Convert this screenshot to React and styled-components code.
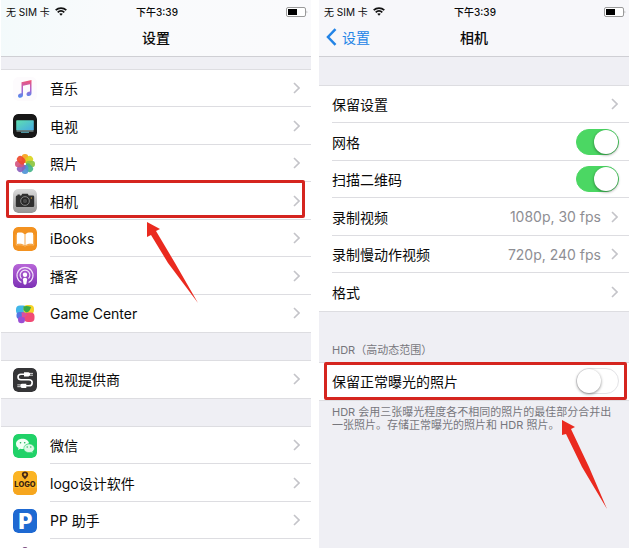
import React, { useState } from "react";
import styled, { createGlobalStyle, css } from "styled-components";

const GlobalStyle = createGlobalStyle`
  * {
    box-sizing: border-box;
  }

  body {
    margin: 0;
    background: #ffffff;
    color: #0a0a0a;
    font-family: Inter, "Noto Sans CJK SC", sans-serif;
    font-size: 14px;
  }
`;

const Page = styled.main`
  display: grid;
  grid-template-columns: 1fr 1fr;
  gap: 8px;
  height: 100vh;
  padding-left: 1px;
  overflow: hidden;
`;

const Screen = styled.section`
  min-width: 0;
  overflow: hidden;
  background: #efeff4;
`;

const Header = styled.header`
  height: 57px;
  border-bottom: 1px solid #cfcfd4;
  background: ${(props) =>
    props.$tinted
      ? "linear-gradient(100deg, #f3fafb, #f9fafc 35%, #fafafc)"
      : "#f7f7fa"};
`;

const StatusBar = styled.div`
  display: grid;
  grid-template-columns: 1fr auto 1fr;
  align-items: center;
  height: 23px;
  padding: 0 3px 0 5px;
  font-size: 10px;
`;

const Carrier = styled.span`
  display: flex;
  align-items: center;
  gap: 5px;
`;

const Clock = styled.span`
  font-weight: 500;
`;

const BatterySlot = styled.span`
  display: flex;
  justify-content: flex-end;
`;

const NavBar = styled.div`
  display: grid;
  grid-template-columns: 1fr auto 1fr;
  align-items: center;
  height: 28px;
  padding: 0 7px;
`;

const Title = styled.h1`
  grid-column: 2;
  margin: 0;
  font-size: 14px;
  font-weight: 500;
`;

const BackLink = styled.a`
  display: flex;
  align-items: center;
  gap: 5px;
  color: #2384e6;
  text-decoration: none;
`;

const Spacer = styled.div`
  height: ${(props) => (props.$small ? 13 : 29)}px;
`;

const Group = styled.div`
  background: #ffffff;
  box-shadow: 0 0 0 1px #dddde1;
`;

const rowStyles = css`
  position: relative;
  display: flex;
  align-items: stretch;
  gap: 13px;
  height: 37px;
  padding-left: ${(props) => (props.$withIcon ? 12 : 13)}px;
  color: inherit;
  text-decoration: none;

  &:nth-child(even) {
    height: 38px;
  }
`;

const RowLink = styled.a`
  ${rowStyles}
`;

const RowLabel = styled.label`
  ${rowStyles}
`;

const IconSlot = styled.span`
  display: flex;
  align-items: center;

  svg {
    display: block;
    border-radius: 5px;
  }
`;

const RowBody = styled.span`
  display: flex;
  flex: 1;
  align-items: center;
  justify-content: space-between;
  padding-right: ${(props) => (props.$toggle ? 10 : 11)}px;
  border-bottom: 1px solid #dddde1;

  ${RowLink}:last-child > &,
  ${RowLabel}:last-child > & {
    border-bottom-color: transparent;
  }
`;

const RowEnd = styled.span`
  display: flex;
  align-items: center;
  gap: 10px;
  color: #8e8e93;
`;

const Switch = styled.input`
  appearance: none;
  display: flex;
  width: 43px;
  height: 26px;
  margin: 0;
  padding: 1px;
  border: 1px solid #e3e3e6;
  border-radius: 13px;
  background: #ffffff;

  &::before {
    content: "";
    width: 24px;
    height: 24px;
    margin: -1px;
    border-radius: 50%;
    background: #ffffff;
    box-shadow: 0 1px 3px rgba(0, 0, 0, 0.45);
  }

  &:checked {
    justify-content: flex-end;
    border-color: #4bd763;
    background: #4bd763;
  }
`;

const GroupTitle = styled.h2`
  margin: 0;
  padding: 31px 13px 5px;
  color: #77777d;
  font-size: 11px;
  font-weight: 400;
  line-height: 16px;
`;

const GroupNote = styled.p`
  margin: 0;
  padding: 6px 13px;
  color: #77777d;
  font-size: 11px;
  line-height: 13px;
`;

const Highlight = styled.span`
  position: absolute;
  inset: ${(props) => (props.$raised ? "-2px 6px 2px 5px" : "-1px 2px 0 5px")};
  border: 3px solid #d5251f;
  border-radius: 2px;
  pointer-events: none;
`;

const Pointer = styled.svg`
  position: absolute;
  z-index: 1;
  top: ${(props) => props.$top}px;
  left: ${(props) => props.$left}px;
  overflow: visible;
  pointer-events: none;
`;

const WifiIcon = () => (
  <svg width="12" height="9" viewBox="0 0 12 9" fill="none" stroke="#111" strokeWidth="1.7">
    <path d="M0.7 3.2C3.7.3 8.3.3 11.3 3.2" />
    <path d="M2.7 5.3C4.6 3.5 7.4 3.5 9.3 5.3" />
    <path d="M4.2 6.8C5.2 5.9 6.8 5.9 7.8 6.8L6 8.8Z" fill="#111" stroke="none" />
  </svg>
);

const BatteryIcon = () => (
  <svg width="22" height="10" viewBox="0 0 22 10">
    <rect x="0.5" y="0.5" width="19" height="9" rx="1.5" fill="#fff" stroke="#9a9a9a" />
    <rect x="2" y="2" width="9" height="6" fill="#000" />
    <path d="M20.7 3.4Q22 5 20.7 6.6Z" fill="#8d8d8d" />
  </svg>
);

const Chevron = () => (
  <svg width="7" height="12" viewBox="0 0 7 12" fill="none" stroke="#c4c4c9" strokeWidth="1.6">
    <path d="M1 1L6 6L1 11" />
  </svg>
);

const BackIcon = () => (
  <svg width="11" height="18" viewBox="0 0 11 18" fill="none" stroke="#2384e6" strokeWidth="2.5">
    <path d="M9.5 1.2L2 9L9.5 16.8" />
  </svg>
);

const AppIcon = ({ children }) => (
  <svg width="24" height="24" viewBox="0 0 24 24" aria-hidden="true">
    {children}
  </svg>
);

const MusicIcon = () => (
  <AppIcon>
    <defs>
      <linearGradient id="note" x1="0" y1="0" x2="0" y2="1">
        <stop offset="0" stopColor="#f4536f" />
        <stop offset="0.5" stopColor="#b262cd" />
        <stop offset="1" stopColor="#4c8ff0" />
      </linearGradient>
    </defs>
    <rect width="24" height="24" rx="5" fill="#fdfbfd" />
    <path
      d="M8.5 5.2L18.5 3V16.2C18.5 18 17.3 19 15.8 19C14.2 19 13.4 18 13.5 16.9C13.6 15.4 15 14.8 17 14.5V7.3L10 8.8V18C10 19.8 8.7 20.8 7.2 20.8C5.7 20.8 4.9 19.8 5 18.7C5.1 17.2 6.5 16.7 8.5 16.3Z"
      fill="url(#note)"
    />
  </AppIcon>
);

const TvIcon = () => (
  <AppIcon>
    <defs>
      <linearGradient id="tv" x1="0" y1="0" x2="1" y2="1">
        <stop offset="0" stopColor="#5fe0b0" />
        <stop offset="1" stopColor="#45a9e3" />
      </linearGradient>
    </defs>
    <rect width="24" height="24" rx="5" fill="#171717" />
    <rect x="3.2" y="6.3" width="17.6" height="10" rx="0.6" fill="url(#tv)" />
    <path d="M3.5 17H20.5" stroke="#d5f3ef" strokeWidth="0.7" />
    <path d="M8 18.3H16" stroke="#5cb3c4" strokeWidth="1" />
  </AppIcon>
);

const petals = [
  "#f7a21b",
  "#d9d521",
  "#8cc63f",
  "#45b58a",
  "#4f94d6",
  "#8b62bd",
  "#d4557f",
  "#ee4b2f",
];

const PhotosIcon = () => (
  <AppIcon>
    <rect width="24" height="24" rx="5" fill="#fff" />
    {petals.map((color, index) => (
      <rect
        key={color}
        x="8.7"
        y="2"
        width="6.6"
        height="9.2"
        rx="3.2"
        fill={color}
        fillOpacity="0.92"
        transform={`rotate(${index * 45} 12 12)`}
      />
    ))}
    <circle cx="12" cy="12" r="1" fill="#fff" />
  </AppIcon>
);

const CameraIcon = () => (
  <AppIcon>
    <defs>
      <linearGradient id="camera" x1="0" y1="0" x2="0" y2="1">
        <stop offset="0" stopColor="#dcdcdc" />
        <stop offset="1" stopColor="#949494" />
      </linearGradient>
    </defs>
    <rect width="24" height="24" rx="5" fill="url(#camera)" />
    <path
      d="M4.5 5.6H6.8V6.5H8.2L9.3 4.8H14.7L15.8 6.5H20Q21.2 6.5 21.2 7.7V16.8Q21.2 18 20 18H4Q2.8 18 2.8 16.8V7.7Q2.8 6.5 4.5 6.5Z"
      fill="#303030"
    />
    <circle cx="12" cy="12" r="4.4" fill="#303030" stroke="#888" strokeWidth="0.9" />
    <circle cx="12" cy="12" r="2.7" fill="#494949" stroke="#1d1d1d" strokeWidth="0.8" />
    <circle cx="18.4" cy="9" r="0.7" fill="#c79a36" />
  </AppIcon>
);

const BooksIcon = () => (
  <AppIcon>
    <rect width="24" height="24" rx="5" fill="#f39220" />
    <path
      d="M11.6 7.2C9.7 5.2 6.2 5.3 4 6V17C6.8 16.3 9.8 16.6 11.6 18.3ZM12.4 7.2C14.3 5.2 17.8 5.3 20 6V17C17.2 16.3 14.2 16.6 12.4 18.3Z"
      fill="#fff"
    />
    <path d="M3.3 7.5V18.1C6.7 17.5 9.7 17.7 12 19.2C14.3 17.7 17.3 17.5 20.7 18.1V7.5" fill="none" stroke="#ffe1b5" strokeWidth="0.5" />
  </AppIcon>
);

const PodcastIcon = () => (
  <AppIcon>
    <defs>
      <linearGradient id="podcast" x1="0" y1="0" x2="0" y2="1">
        <stop offset="0" stopColor="#b866d8" />
        <stop offset="1" stopColor="#7d31b5" />
      </linearGradient>
    </defs>
    <rect width="24" height="24" rx="5" fill="url(#podcast)" />
    <g fill="none" stroke="#f3e3fa" strokeWidth="1.2">
      <path d="M8.4 18.5A8 8 0 1 1 15.6 18.5" />
      <path d="M8.5 14.5A4.9 4.9 0 1 1 15.5 14.5" />
    </g>
    <circle cx="12" cy="10.7" r="2.2" fill="#fff" />
    <path d="M9.8 14.9Q12 12.7 14.2 14.9L13.4 20Q12 21.6 10.6 20Z" fill="#fff" />
  </AppIcon>
);

const GameCenterIcon = () => (
  <AppIcon>
    <rect width="24" height="24" rx="5" fill="#fff" />
    <rect x="3" y="3.5" width="11" height="9" rx="4" fill="#41b6e8" />
    <rect x="10.5" y="3" width="10.5" height="9" rx="4" fill="#f5d327" />
    <path d="M10.5 4.5Q14 3.5 18 5Q17 10 13 10.5L10.5 8Z" fill="#39a848" />
    <rect x="3.5" y="10" width="9" height="7" rx="3" fill="#5574e2" />
    <rect x="11" y="10.5" width="10.5" height="9.5" rx="4" fill="#f14b75" />
    <circle cx="8.5" cy="17.7" r="3.5" fill="#9a4ed4" />
    <path d="M8.5 10.5Q12 9.5 14 12Q13 16 9 15Z" fill="#dc4f9d" />
  </AppIcon>
);

const ProviderIcon = () => (
  <AppIcon>
    <rect width="24" height="24" rx="5" fill="#353537" />
    <path
      d="M11.5 6.3H8Q5 6.3 5 9Q5 11.8 8 11.8H16Q19.2 11.8 19.2 14.7Q19.2 17.8 16 17.8H13"
      fill="none"
      stroke="#fff"
      strokeWidth="1.6"
    />
    <path d="M11 4.2H15.5L17 5V7.6L15.5 8.4H11ZM13.3 15.7H8.8L7.3 16.5V19.1L8.8 19.9H13.3Z" fill="#fff" />
    <path d="M17 5.4H20M17 7.2H20M7.3 16.9H4.3M7.3 18.7H4.3" stroke="#fff" strokeWidth="0.8" />
  </AppIcon>
);

const WechatIcon = () => (
  <AppIcon>
    <rect width="24" height="24" rx="5" fill="#20d268" />
    <path
      d="M9.5 4.8C5.8 4.8 3 7 3 10C3 11.8 4 13.2 5.5 14.1L5 16L7.4 14.8Q9.2 15.3 11 15C11 11.5 13.5 9.6 16.1 9.5C15.7 6.7 12.9 4.8 9.5 4.8Z"
      fill="#f2fff6"
    />
    <path
      d="M16 10C12.9 10 10.8 12 10.8 14.3C10.8 16.7 13 18.6 16 18.6Q17.1 18.6 18.2 18.2L20 19.2L19.5 17.5C20.7 16.7 21.4 15.6 21.4 14.3C21.4 12 19.1 10 16 10Z"
      fill="#dcf8e6"
      stroke="#20d268"
      strokeWidth="0.5"
    />
    <g fill="#20b45b">
      <circle cx="7.5" cy="8.8" r="0.8" />
      <circle cx="11.7" cy="8.8" r="0.8" />
      <circle cx="14.2" cy="13" r="0.7" />
      <circle cx="17.8" cy="13" r="0.7" />
    </g>
  </AppIcon>
);

const LogoIcon = () => (
  <AppIcon>
    <rect width="24" height="24" rx="5" fill="#fbb424" />
    <path d="M0 17H24V19Q24 24 19 24H5Q0 24 0 19Z" fill="#f6a61e" />
    <path d="M12 8.5C10.5 6.5 8.8 5.2 8.8 3.5C8.8 1.6 10.2.5 12 .5C13.8.5 15.2 1.6 15.2 3.5C15.2 5.2 13.5 6.5 12 8.5Z" fill="#4a2c16" />
    <circle cx="12" cy="3.6" r="1.3" fill="#fbb424" />
    <text x="12" y="15.5" fill="#38200f" fontFamily="Inter" fontSize="7.5" fontWeight="800" textAnchor="middle">
      LOGO
    </text>
  </AppIcon>
);

const PpIcon = () => (
  <AppIcon>
    <rect width="24" height="24" rx="5" fill="#1e69d2" />
    <text x="12.5" y="19.5" fill="#fff" fontFamily="Inter" fontSize="21" fontWeight="900" textAnchor="middle">
      P
    </text>
    <circle cx="12.8" cy="10" r="2" fill="#1e69d2" />
  </AppIcon>
);

const NextAppIcon = () => (
  <AppIcon>
    <rect width="24" height="24" rx="5" fill="#fff" />
    <circle cx="12" cy="4" r="3" fill="#7b4a80" />
  </AppIcon>
);

const ARROW_LEFT = "0,0 13,7 9,9 28,41 51,81 21,41 4,13 0,15";
const ARROW_RIGHT = "0,0 13,7 9,9 27,47 45,89 20,47 4,14 0,15";

const settingGroups = [
  [
    { icon: <MusicIcon />, name: "音乐" },
    { icon: <TvIcon />, name: "电视" },
    { icon: <PhotosIcon />, name: "照片" },
    { icon: <CameraIcon />, name: "相机", highlighted: true },
    { icon: <BooksIcon />, name: "iBooks" },
    { icon: <PodcastIcon />, name: "播客" },
    { icon: <GameCenterIcon />, name: "Game Center" },
  ],
  [{ icon: <ProviderIcon />, name: "电视提供商" }],
  [
    { icon: <WechatIcon />, name: "微信" },
    { icon: <LogoIcon />, name: "logo设计软件" },
    { icon: <PpIcon />, name: "PP 助手" },
    { icon: <NextAppIcon />, name: "" },
  ],
];

const PhoneStatus = () => (
  <StatusBar>
    <Carrier>
      无 SIM 卡
      <WifiIcon />
    </Carrier>
    <Clock>下午3:39</Clock>
    <BatterySlot>
      <BatteryIcon />
    </BatterySlot>
  </StatusBar>
);

const SettingRow = ({ icon, name, value, highlighted }) => (
  <RowLink href="#" $withIcon={Boolean(icon)}>
    {icon && <IconSlot>{icon}</IconSlot>}
    <RowBody>
      {name}
      <RowEnd>
        {value}
        <Chevron />
      </RowEnd>
    </RowBody>
    {highlighted && (
      <>
        <Highlight $raised />
        <Pointer $top={40} $left={146} width="51" height="81">
          <polygon points={ARROW_LEFT} fill="#ea2a1f" />
        </Pointer>
      </>
    )}
  </RowLink>
);

const SwitchRow = ({ name, on, highlighted }) => {
  const [checked, setChecked] = useState(Boolean(on));

  return (
    <RowLabel>
      <RowBody $toggle>
        {name}
        <Switch
          type="checkbox"
          role="switch"
          checked={checked}
          onChange={(e) => setChecked(e.target.checked)}
        />
      </RowBody>
      {highlighted && (
        <>
          <Highlight />
          <Pointer $top={57} $left={243} width="45" height="89">
            <polygon points={ARROW_RIGHT} fill="#ea2a1f" />
          </Pointer>
        </>
      )}
    </RowLabel>
  );
};

export default function App() {
  return (
    <>
      <GlobalStyle />
      <Page>
        <Screen>
          <Header $tinted>
            <PhoneStatus />
            <NavBar>
              <Title>设置</Title>
            </NavBar>
          </Header>
          {settingGroups.map((group, index) => (
            <React.Fragment key={index}>
              <Spacer $small={index === 0} />
              <Group>
                {group.map((item) => (
                  <SettingRow key={item.name} {...item} />
                ))}
              </Group>
            </React.Fragment>
          ))}
        </Screen>

        <Screen>
          <Header>
            <PhoneStatus />
            <NavBar>
              <BackLink href="#">
                <BackIcon />
                设置
              </BackLink>
              <Title>相机</Title>
            </NavBar>
          </Header>
          <Spacer />
          <Group>
            <SettingRow name="保留设置" />
            <SwitchRow name="网格" on />
            <SwitchRow name="扫描二维码" on />
            <SettingRow name="录制视频" value="1080p, 30 fps" />
            <SettingRow name="录制慢动作视频" value="720p, 240 fps" />
            <SettingRow name="格式" />
          </Group>
          <GroupTitle>HDR（高动态范围）</GroupTitle>
          <Group>
            <SwitchRow name="保留正常曝光的照片" highlighted />
          </Group>
          <GroupNote>
            HDR 会用三张曝光程度各不相同的照片的最佳部分合并出一张照片。存储正常曝光的照片和 HDR 照片。
          </GroupNote>
        </Screen>
      </Page>
    </>
  );
}
